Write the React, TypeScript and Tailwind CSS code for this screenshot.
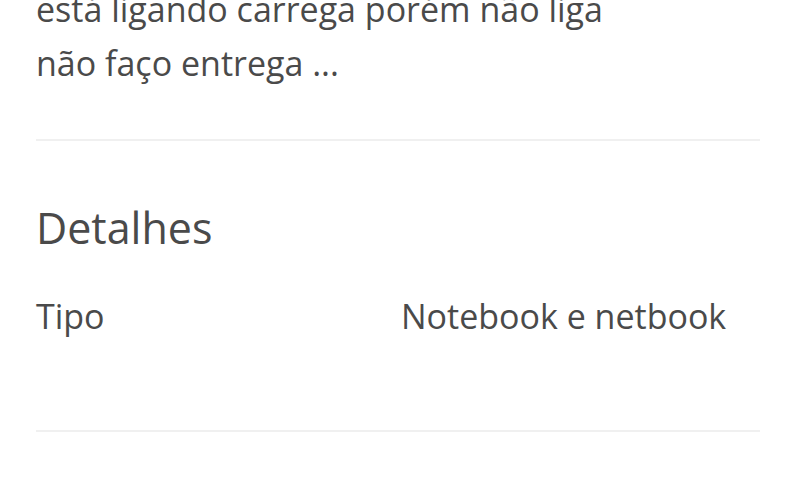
import React from "react";

const details = [{ label: "Tipo", value: "Notebook e netbook" }];

function App() {
  return (
    <div
      className="w-[800px] h-[480px] overflow-hidden bg-white px-[36px] text-[#4a4a4a]"
      style={{ fontFamily: '"Open Sans", "Noto Sans", sans-serif' }}
    >
      <p className="-mt-[18px] text-[34px] leading-[54px]">
        está ligando carrega porém não liga
        <br />
        não faço entrega ...
      </p>

      <div className="mt-[49px] h-[2px] w-[724px] bg-[#f0f0f0]" />

      <h2 className="mt-[61px] text-[43px] leading-[52px]">Detalhes</h2>

      <div className="mt-[35px]">
        {details.map((item) => (
          <div key={item.label} className="grid grid-cols-2 w-[726px]">
            <span className="text-[34px] leading-[54px]">{item.label}</span>
            <span className="pl-[2px] text-[34px] leading-[54px]">
              {item.value}
            </span>
          </div>
        ))}
      </div>

      <div className="mt-[87px] h-[2px] w-[724px] bg-[#f0f0f0]" />
    </div>
  );
}

export default App;
